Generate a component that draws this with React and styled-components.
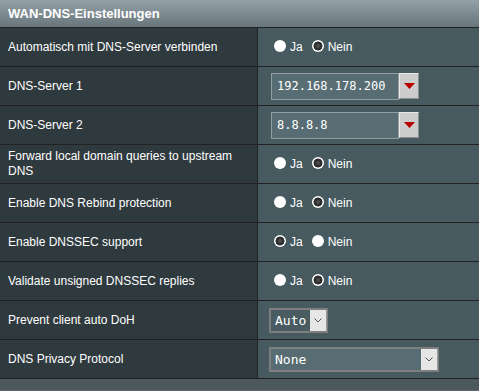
import React from 'react';
import styled, { createGlobalStyle } from 'styled-components';

const Global = createGlobalStyle`
  *, *::before, *::after { box-sizing: border-box; }
  html, body { margin: 0; padding: 0; background: #4c585c; }
  body { font-family: "Liberation Sans", Arial, sans-serif; }
`;

const Panel = styled.div`
  width: 479px;
  height: 391px;
  overflow: hidden;
  display: flex;
  flex-direction: column;
  background: #4c585c;
`;

const Header = styled.div`
  height: 28px;
  flex: none;
  border-bottom: 1px solid #222;
  background: linear-gradient(#93a0a5, #68767c);
  color: #fff;
  font-weight: bold;
  font-size: 13px;
  display: flex;
  align-items: center;
  padding-left: 8px;
`;

const Row = styled.div`
  display: grid;
  grid-template-columns: 258px 1fr;
  height: 39px;
  flex: none;
  border-bottom: 1px solid #222;
`;

const Label = styled.div`
  background: #2f3a3e;
  border-right: 1px solid #222;
  color: #fff;
  font-size: 12px;
  line-height: 15px;
  padding: 0 14px 0 8px;
  display: flex;
  align-items: center;
`;

const Cell = styled.div`
  background: #475a5f;
  display: flex;
  align-items: center;
  padding-left: 11px;
`;

const RadioOption = styled.span`
  display: inline-flex;
  align-items: center;
  color: #fff;
  font-size: 12px;
  margin-left: 5px;
  & + & { margin-left: 9px; }
`;

const Dot = styled.span`
  width: 12px;
  height: 12px;
  border-radius: 50%;
  margin-right: 4px;
  margin-bottom: 3px;
  background: ${p => p.$on
    ? 'radial-gradient(circle at center, #4a4a4a 0 1.8px, #2e2e2e 2.2px 4.2px, #fff 4.8px)'
    : '#fff'};
`;

const InputGroup = styled.div`
  display: flex;
  align-items: flex-start;
  margin-left: 2px;
`;

const TextBox = styled.div`
  width: 128px;
  height: 27px;
  background: #576d73;
  border: 1px solid #929ea1;
  color: #fff;
  font-family: "DejaVu Sans Mono", "Liberation Mono", monospace;
  font-size: 12px;
  display: flex;
  align-items: center;
  padding-left: 5px;
`;

const PullButton = styled.div`
  width: 20px;
  height: 26px;
  background: #cdcdcd;
  border-top: 1px solid #e8e8e8;
  border-left: 1px solid #e8e8e8;
  border-right: 1px solid #8e8e8e;
  border-bottom: 1px solid #8e8e8e;
  display: flex;
  align-items: center;
  justify-content: center;
`;

const SelectBox = styled.div`
  width: ${p => p.$w}px;
  height: 25px;
  background: ${p => p.$bg};
  border: 2px solid #7e7e7e;
  border-right-width: 1px;
  color: #fff;
  font-family: "DejaVu Sans Mono", "Liberation Mono", monospace;
  font-size: 13px;
  display: flex;
  align-items: center;
  justify-content: space-between;
  padding-left: 4px;
`;

const SelectArrow = styled.span`
  width: 17px;
  height: 21px;
  background: #e6e6e6;
  border-right: 1px solid #9a9a9a;
  display: flex;
  align-items: center;
  justify-content: center;
`;

const Footer = styled.div`
  flex: 1;
  background: #4c585c;
  border-bottom: 1px solid #5e6a6e;
`;

const Triangle = () => (
  <svg width="11" height="6" viewBox="0 0 11 6">
    <polygon points="0,0 11,0 5.5,6" fill="#b80000" />
  </svg>
);

const Chevron = () => (
  <svg width="8" height="5" viewBox="0 0 8 5">
    <polyline points="0.5,0.5 4,4 7.5,0.5" fill="none" stroke="#555" strokeWidth="1" />
  </svg>
);

const Radios = ({ yes }) => (
  <>
    <RadioOption><Dot $on={yes} />Ja</RadioOption>
    <RadioOption><Dot $on={!yes} />Nein</RadioOption>
  </>
);

const rows = [
  { label: 'Automatisch mit DNS-Server verbinden', type: 'radio', yes: false },
  { label: 'DNS-Server 1', type: 'input', value: '192.168.178.200' },
  { label: 'DNS-Server 2', type: 'input', value: '8.8.8.8' },
  { label: 'Forward local domain queries to upstream DNS', type: 'radio', yes: false },
  { label: 'Enable DNS Rebind protection', type: 'radio', yes: false },
  { label: 'Enable DNSSEC support', type: 'radio', yes: true },
  { label: 'Validate unsigned DNSSEC replies', type: 'radio', yes: false },
  { label: 'Prevent client auto DoH', type: 'select', value: 'Auto', w: 59, bg: '#495c61' },
  { label: 'DNS Privacy Protocol', type: 'select', value: 'None', w: 170, bg: '#576d73' },
];

export default function App() {
  return (
    <>
      <Global />
      <Panel>
        <Header>WAN-DNS-Einstellungen</Header>
        {rows.map((r, i) => (
          <Row key={i}>
            <Label>{r.label}</Label>
            <Cell>
              {r.type === 'radio' && <Radios yes={r.yes} />}
              {r.type === 'input' && (
                <InputGroup>
                  <TextBox>{r.value}</TextBox>
                  <PullButton><Triangle /></PullButton>
                </InputGroup>
              )}
              {r.type === 'select' && (
                <SelectBox $w={r.w} $bg={r.bg}>
                  {r.value}
                  <SelectArrow><Chevron /></SelectArrow>
                </SelectBox>
              )}
            </Cell>
          </Row>
        ))}
        <Footer />
      </Panel>
    </>
  );
}
